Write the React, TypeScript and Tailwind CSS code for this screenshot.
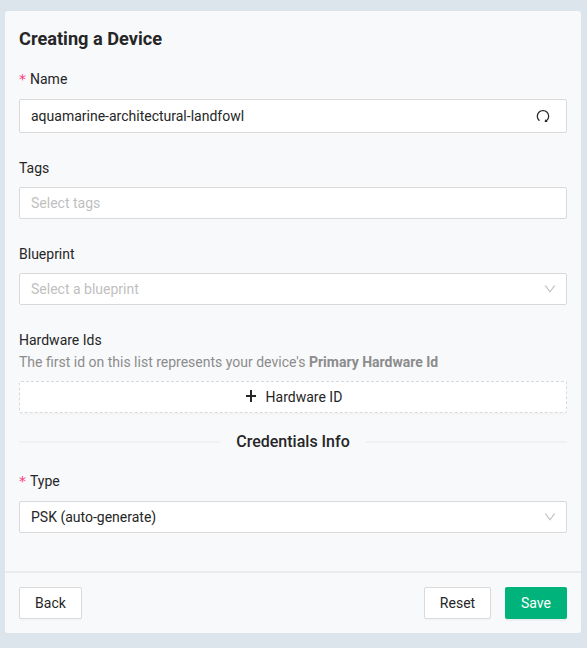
import type { ReactNode } from "react";
import { AiOutlineDown, AiOutlineRedo } from "react-icons/ai";

function Label({ required, children }: { required?: boolean; children: ReactNode }) {
  return (
    <div className="flex h-[22px] items-center text-[#262626]">
      {required && <span className="mr-1 w-[7px] font-['DejaVu_Sans',sans-serif] text-[#ff3377]">*</span>}
      {children}
    </div>
  );
}

const box = "flex items-center justify-between rounded-xs border border-[#d9d9d9] bg-white";
const button = "flex h-8 items-center justify-center rounded-xs border border-[#d9d9d9] bg-white text-[#262626] shadow-[0_2px_0_rgba(0,0,0,0.016)]";

export default function App() {
  return (
    <div className="h-[648px] w-[587px] bg-[#dde5ec] pt-[11px] pl-[5px] font-[Roboto,sans-serif] text-sm leading-[22px]">
      <div className="flex h-[622px] w-[576px] flex-col rounded-[3px] bg-[#f8f9fb]">
        <div className="flex flex-1 flex-col px-3.5 pt-4">
          <h1 className="h-[24px] text-[18.2px] leading-[24px] font-bold text-[#262626]">Creating a Device</h1>

          <div className="mt-[17px]">
            <Label required>Name</Label>
            <div className={`${box} mt-[9px] h-[34px] pr-[15px] pl-[11px]`}>
              <span className="text-[#262626]">aquamarine-architectural-landfowl</span>
              <AiOutlineRedo size={16} className="text-[#262626]" />
            </div>
          </div>

          <div className="mt-6">
            <Label>Tags</Label>
            <div className={`${box} mt-2 h-8 px-[11px]`}>
              <span className="text-[#bfbfbf]">Select tags</span>
            </div>
          </div>

          <div className="mt-6">
            <Label>Blueprint</Label>
            <div className={`${box} mt-2 h-8 pr-[9px] pl-[11px]`}>
              <span className="text-[#bfbfbf]">Select a blueprint</span>
              <AiOutlineDown size={14} className="text-[#bfbfbf]" />
            </div>
          </div>

          <div className="mt-6">
            <Label>Hardware Ids</Label>
            <p className="text-[#8c8c8c]">
              The first id on this list represents your device's <b className="font-bold">Primary Hardware Id</b>
            </p>
            <button className={`${button} mt-2 w-full gap-2 border-dashed`}>
              <svg width="14" height="14" viewBox="0 0 14 14" className="-translate-y-px" fill="none" stroke="currentColor" strokeWidth="2">
                <path d="M7 1v12M2 7h10" />
              </svg>
              Hardware ID
            </button>
          </div>

          <div className="mt-4 flex h-[25px] items-center gap-4 text-base font-medium text-[#262626]">
            <span className="h-0.5 flex-1 bg-[#f0f1f3]" />
            Credentials Info
            <span className="h-0.5 flex-1 bg-[#f0f1f3]" />
          </div>

          <div className="mt-4">
            <Label required>Type</Label>
            <div className={`${box} mt-[9px] h-8 pr-[9px] pl-[11px]`}>
              <span className="text-[#262626]">PSK (auto-generate)</span>
              <AiOutlineDown size={14} className="text-[#bfbfbf]" />
            </div>
          </div>
        </div>

        <div className="flex h-[62px] items-start border-t-2 border-[#e9ebee] px-3.5 pt-3.5">
          <button className={`${button} w-[63px]`}>Back</button>
          <button className={`${button} ml-auto w-[67px]`}>Reset</button>
          <button className="ml-3.5 flex h-8 w-[62px] items-center justify-center rounded-xs bg-[#00b37a] text-white shadow-[0_2px_0_rgba(0,0,0,0.045)]">
            Save
          </button>
        </div>
      </div>
    </div>
  );
}
